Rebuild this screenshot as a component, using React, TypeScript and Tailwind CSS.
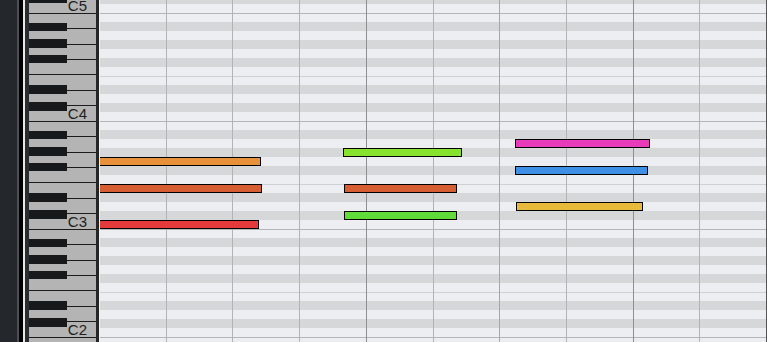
const ROWS = ["B", "A#", "A", "G#", "G", "F#", "F", "E", "D#", "D", "C#", "C"];
const WHITE_KEYS = ["B", "A", "G", "F", "E", "D", "C"];
const BLACK_KEYS = ["top-[9.75px]", "top-[26.25px]", "top-[41.75px]", "top-[72.25px]", "top-[89px]"];
const OCTAVES = [5, 4, 3, 2, 1];

const COLUMNS = [
  "",
  "border-l border-[#b3b3b5]",
  "border-l border-[#b3b3b5]",
  "border-l border-[#b3b3b5]",
  "border-l border-[#8f8f91]",
  "border-l border-[#b3b3b5]",
  "border-l border-[#a6a6a8]",
  "border-l border-[#b3b3b5]",
  "border-l border-[#8f8f91]",
  "border-l border-[#b3b3b5]",
];

const NOTES = [
  { pos: "left-[-2px] top-[157px] w-[163px]", color: "bg-[#e8903a]" },
  { pos: "left-[-2px] top-[184px] w-[164px]", color: "bg-[#d65e33]" },
  { pos: "left-[-2px] top-[220px] w-[161px]", color: "bg-[#e53a3b]" },
  { pos: "left-[243px] top-[148px] w-[119px]", color: "bg-[#86e22f]" },
  { pos: "left-[244px] top-[184px] w-[113px]", color: "bg-[#d65e33]" },
  { pos: "left-[244px] top-[211px] w-[113px]", color: "bg-[#5fdb3a]" },
  { pos: "left-[415px] top-[139px] w-[135px]", color: "bg-[#e73bb9]" },
  { pos: "left-[415px] top-[166px] w-[133px]", color: "bg-[#3d90e5]" },
  { pos: "left-[416px] top-[202px] w-[127px]", color: "bg-[#e7ba3b]" },
];

const KeyboardOctave = ({ octave }: { octave: number }) => (
  <div className="relative h-[108px] flex flex-col">
    {WHITE_KEYS.map((k) => (
      <div
        key={k}
        className="flex-1 border-t border-[#1c1c1c] bg-[#b4b4b4] flex items-end justify-end pr-[9px]"
      >
        {/* octave 1 sits below the visible area */}
        {k === "C" && octave > 1 && (
          <span className="text-[15px] leading-none text-[#1e1e1e] font-['Liberation_Sans',Arial,sans-serif]">
            C{octave}
          </span>
        )}
      </div>
    ))}
    {BLACK_KEYS.map((t) => (
      <div key={t} className={`absolute left-0 w-[38px] h-[8.5px] bg-[#18191b] ${t}`} />
    ))}
  </div>
);

const GridOctave = () => (
  <div className="flex flex-col">
    {ROWS.map((r) => (
      <div
        key={r}
        className={
          "h-[9px] " +
          (r.includes("#") ? "bg-[#d6d7d9] " : "bg-[#edeef2] ") +
          (r === "B" ? "border-t border-[#b4b5b8]" : r === "E" ? "border-t border-[#d0d1d4]" : "")
        }
      />
    ))}
  </div>
);

export default function App() {
  return (
    <div className="w-[767px] h-[342px] overflow-hidden flex bg-[#24282c]">
      <div className="w-[17px] bg-[#24282c]" />
      <div className="w-[2px] bg-[#4b4f53]" />
      <div className="w-[4px] bg-black" />
      <div className="w-[2px] bg-[#e8e8e8]" />
      <div className="w-[4px] bg-[#2a2d30]" />

      <div className="w-[67px] overflow-hidden">
        <div className="-mt-[95px]">
          {OCTAVES.map((o) => (
            <KeyboardOctave key={o} octave={o} />
          ))}
        </div>
      </div>
      <div className="w-[3px] bg-[#262626]" />
      <div className="w-[1px] bg-[#f2f2f4]" />

      <div className="relative flex-1 overflow-hidden">
        <div className="-mt-[95px]">
          {OCTAVES.map((o) => (
            <GridOctave key={o} />
          ))}
        </div>
        <div className="absolute inset-0 flex">
          {COLUMNS.map((c, i) => (
            <div key={i} className={"flex-1 " + c} />
          ))}
        </div>
        {NOTES.map((n, i) => (
          <div
            key={i}
            className={`absolute h-[9px] border border-black ${n.pos} ${n.color}`}
          />
        ))}
      </div>
      <div className="w-[1px] bg-[#555]" />
    </div>
  );
}
